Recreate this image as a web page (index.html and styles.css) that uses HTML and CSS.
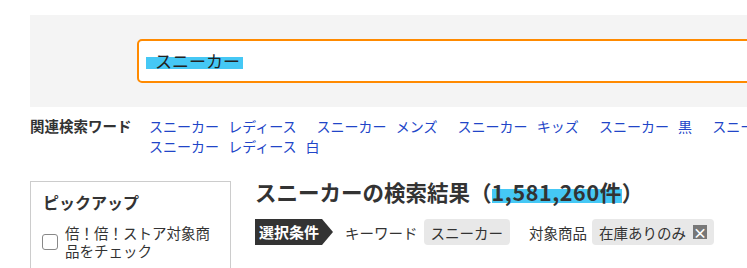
FILE: index.html
```html
<!DOCTYPE html>
<html lang="ja">
<head>
<meta charset="utf-8">
<title>スニーカーの検索結果</title>
<link rel="stylesheet" href="styles.css">
</head>
<body>
<div class="page">
  <div class="search-band">
    <div class="search-box"><span class="sel">スニーカー</span></div>
  </div>

  <div class="related">
    <div class="related-label">関連検索ワード</div>
    <div class="related-links">
      <a href="#">スニーカー レディース</a>
      <a href="#">スニーカー メンズ</a>
      <a href="#">スニーカー キッズ</a>
      <a href="#">スニーカー 黒</a>
      <a href="#">スニーカー 白</a>
      <a href="#">スニーカー レディース 白</a>
    </div>
  </div>

  <div class="main">
    <aside class="pickup">
      <div class="pickup-title">ピックアップ</div>
      <label class="check-row">
        <span class="checkbox"></span>
        <span class="check-text">倍！倍！ストア対象商品をチェック</span>
      </label>
    </aside>
    <section class="results">
      <h1 class="result-title">スニーカーの検索結果（<span class="count">1,581,260件</span>）</h1>
      <div class="conditions">
        <span class="cond-label">選択条件</span>
        <span class="cond-key">キーワード</span>
        <span class="chip">スニーカー</span>
        <span class="cond-key cond-key2">対象商品</span>
        <span class="chip">在庫ありのみ<span class="chip-x">×</span></span>
      </div>
    </section>
  </div>
</div>
</body>
</html>
```
FILE: styles.css
```css
html, body {
  margin: 0;
  padding: 0;
  overflow: hidden;
  background: #fff;
}
body {
  font-family: "Noto Sans CJK JP", "Noto Sans", sans-serif;
  color: #333;
}
.page {
  padding: 15px 0 0 30px;
  width: 1100px;
}
.search-band {
  background: #f4f4f4;
  height: 92px;
  display: flex;
  align-items: center;
  padding-left: 107px;
}
.search-box {
  width: 760px;
  height: 40px;
  border: 2px solid #ff8a00;
  border-radius: 5px;
  background: #fff;
  display: flex;
  align-items: center;
  padding-left: 7px;
  box-sizing: content-box;
}
.sel {
  display: inline-block;
  font-size: 17px;
  line-height: 20px;
  height: 20px;
  padding: 0 3px 0 9px;
  color: #222;
  background: linear-gradient(#45c8f5, #45c8f5) no-repeat 0 6px / 100% 12px;
}
.related {
  display: flex;
  margin-top: 9px;
  font-size: 14px;
  line-height: 20px;
}
.related-label {
  width: 119px;
  flex: none;
  font-weight: bold;
  font-size: 14.5px;
  color: #333;
}
.related-links {
  width: 720px;
}
.related-links a {
  color: #2145c8;
  text-decoration: none;
  word-spacing: 6px;
  margin-right: 17px;
  white-space: nowrap;
}
.main {
  display: flex;
  margin-top: 25px;
  gap: 24px;
}
.pickup {
  height: 120px;
  border: 1px solid #ccc;
  flex: none;
  padding: 0 12px;
  box-sizing: border-box;
  width: 201px;
}
.pickup-title {
  font-size: 16px;
  font-weight: bold;
  line-height: 24px;
  margin-top: 8px;
  color: #333;
}
.check-row {
  display: flex;
  align-items: center;
  margin-top: 10px;
  margin-left: -1px;
  gap: 7px;
}
.checkbox {
  width: 14px;
  height: 14px;
  border: 1px solid #888;
  border-radius: 3px;
  background: #fff;
  flex: none;
}
.check-text {
  width: 150px;
  font-size: 14.5px;
  line-height: 18px;
  color: #333;
}
.results {
  flex: 1;
}
.result-title {
  margin: 1px 0 0;
  font-size: 21.5px;
  line-height: 20px;
  font-weight: bold;
  color: #333;
}
.count {
  display: inline-block;
  letter-spacing: 0.6px;
  padding-bottom: 1px;
  background: linear-gradient(transparent 7px, #45c8f5 7px);
}
.conditions {
  display: flex;
  align-items: center;
  margin-top: 16px;
  height: 26px;
  font-size: 14.5px;
}
.cond-label {
  position: relative;
  background: #333;
  color: #fff;
  font-weight: bold;
  font-size: 15px;
  height: 26px;
  line-height: 26px;
  padding: 0 3px 0 4px;
  margin-right: 23px;
}
.cond-label::after {
  content: "";
  position: absolute;
  left: 100%;
  top: 0;
  border-left: 11px solid #333;
  border-top: 13px solid transparent;
  border-bottom: 13px solid transparent;
}
.cond-key {
  color: #333;
  margin-right: 6px;
}
.cond-key2 {
  margin-left: 19px;
  margin-right: 5px;
}
.chip {
  display: inline-flex;
  align-items: center;
  background: #e8e8e8;
  border-radius: 4px;
  height: 26px;
  padding: 0 7px;
  color: #333;
}
.chip-x {
  display: inline-flex;
  align-items: center;
  justify-content: center;
  width: 14px;
  height: 14px;
  background: #777;
  color: #fff;
  font-size: 14px;
  font-weight: bold;
  line-height: 14px;
  margin-left: 7px;
}
```
